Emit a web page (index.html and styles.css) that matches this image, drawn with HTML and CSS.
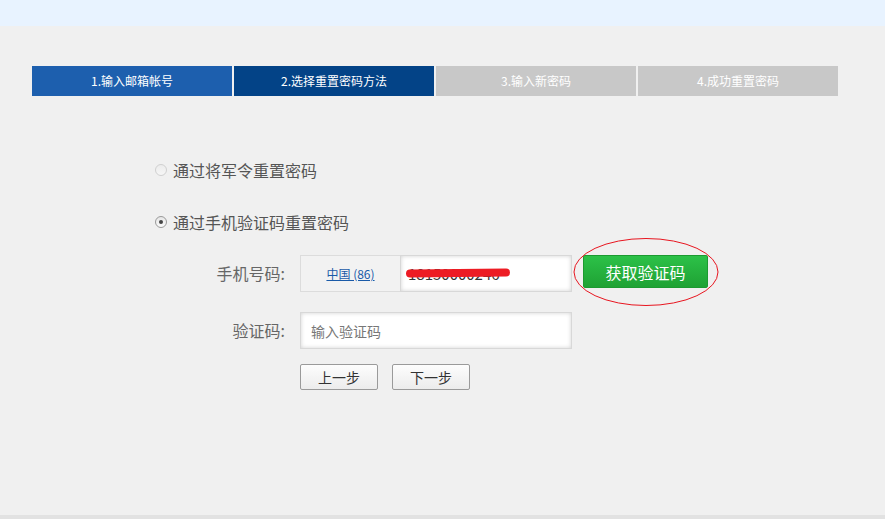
FILE: index.html
```html
<!DOCTYPE html>
<html lang="zh">
<head>
    <meta charset="UTF-8">
    <meta name="viewport" content="width=device-width, initial-scale=1.0">
    <title>重置密码</title>
    <link rel="stylesheet" href="styles.css">
</head>
<body>
    <div class="top-band"></div>
    <div class="main">
        <div class="steps">
            <div class="step done">1.输入邮箱帐号</div>
            <div class="step current">2.选择重置密码方法</div>
            <div class="step">3.输入新密码</div>
            <div class="step">4.成功重置密码</div>
        </div>

        <div class="form">
            <div class="option disabled">
                <span class="radio"></span>
                <span>通过将军令重置密码</span>
            </div>
            <div class="option">
                <span class="radio checked"></span>
                <span>通过手机验证码重置密码</span>
            </div>

            <div class="field">
                <label class="field-label">手机号码:</label>
                <div class="country"><a href="#">中国 (86)</a></div>
                <div class="phone-wrap">
                    <input type="text" class="text-input phone" value="18150000246">
                    <span class="scribble"></span>
                </div>
                <div class="code-wrap">
                    <button class="btn-code">获取验证码</button>
                    <svg class="circle-mark" width="146" height="70" viewBox="0 0 146 70">
                        <ellipse cx="73" cy="35" rx="72" ry="33.5" fill="none" stroke="#e8151f" stroke-width="1"/>
                    </svg>
                </div>
            </div>

            <div class="field">
                <label class="field-label">验证码:</label>
                <input type="text" class="text-input code" placeholder="输入验证码">
            </div>

            <div class="actions">
                <button class="btn">上一步</button>
                <button class="btn">下一步</button>
            </div>
        </div>
    </div>
    <div class="bottom-line"></div>
</body>
</html>
```

FILE: styles.css
```css
body {
    margin: 0;
    background: #f0f0f0;
    font-family: "Noto Sans CJK SC", "Liberation Sans", sans-serif;
    overflow: hidden;
}
.top-band {
    height: 26px;
    background: #e8f3ff;
}
.main {
    height: 489px;
    overflow: hidden;
}
.bottom-line {
    height: 4px;
    background: #e2e2e2;
}
.steps {
    display: flex;
    gap: 2px;
    width: 806px;
    margin: 40px 0 0 32px;
}
.step {
    flex: 1;
    height: 30px;
    line-height: 30px;
    text-align: center;
    font-size: 12px;
    color: #fff;
    background: #c8c8c8;
}
.step.done {
    background: #1d5fae;
}
.step.current {
    background: #034387;
}
.form {
    margin: 62px 0 0 155px;
}
.option {
    display: flex;
    align-items: center;
    gap: 6px;
    height: 24px;
    font-size: 16px;
    color: #555;
    margin-bottom: 28px;
}
.option:nth-child(2) {
    margin-bottom: 21px;
}
.radio {
    width: 10px;
    height: 10px;
    border-radius: 50%;
    border: 1px solid #9a9a9a;
    background: linear-gradient(#e6e6e6, #fafafa);
    position: relative;
}
.option.disabled .radio {
    border-color: #d0d0d0;
    background: linear-gradient(#ececec, #f6f6f6);
}
.radio.checked::after {
    content: "";
    position: absolute;
    left: 3px;
    top: 3px;
    width: 4px;
    height: 4px;
    border-radius: 50%;
    background: #444;
}
.field {
    display: flex;
    align-items: flex-start;
    margin-bottom: 20px;
}
.field-label {
    width: 130px;
    margin-right: 15px;
    height: 37px;
    line-height: 37px;
    text-align: right;
    font-size: 16px;
    color: #666;
}
.country {
    width: 99px;
    height: 35px;
    line-height: 35px;
    text-align: center;
    background: #f2f2f2;
    border: 1px solid #dcdcdc;
    border-right: none;
    font-size: 12px;
}
.country a {
    color: #1a5aa8;
}
.text-input {
    height: 37px;
    box-sizing: border-box;
    border: 1px solid #d8d8d8;
    background: #fff;
    box-shadow: inset 0 0 4px rgba(0, 0, 0, 0.18);
    padding: 0 10px;
    font-family: "Noto Sans CJK SC", "Liberation Sans", sans-serif;
    outline: none;
}
.phone-wrap {
    position: relative;
}
.text-input.phone {
    width: 172px;
    padding-left: 7px;
    font-size: 15px;
    color: #333;
}
.scribble {
    position: absolute;
    left: 6px;
    top: 14px;
    width: 104px;
    height: 8px;
    border-radius: 4px;
    background: #ed1c24;
    transform: rotate(-0.6deg);
}
.text-input.code {
    width: 272px;
    font-size: 14px;
}
.text-input.code::placeholder {
    color: #777;
}
.code-wrap {
    position: relative;
    margin-left: 11px;
}
.btn-code {
    display: block;
    width: 125px;
    height: 33px;
    border: 1px solid #1c9a30;
    border-radius: 2px;
    background: linear-gradient(#2cc148, #1fa234);
    color: #fff;
    font-size: 16px;
    font-family: "Noto Sans CJK SC", "Liberation Sans", sans-serif;
    cursor: pointer;
}
.circle-mark {
    position: absolute;
    left: -10px;
    top: -18px;
    pointer-events: none;
}
.actions {
    display: flex;
    gap: 14px;
    margin: -5px 0 0 145px;
}
.btn {
    width: 78px;
    height: 26px;
    border: 1px solid #9a9a9a;
    border-radius: 2px;
    background: linear-gradient(#fdfdfd, #ececec);
    color: #333;
    font-size: 14px;
    font-family: "Noto Sans CJK SC", "Liberation Sans", sans-serif;
    cursor: pointer;
}
```
